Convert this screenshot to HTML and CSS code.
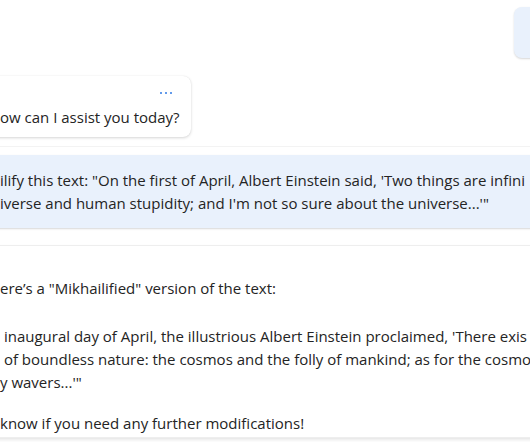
FILE: index.html
```html
<!DOCTYPE html>
<html>
<head>
<meta charset="utf-8">
<link rel="stylesheet" href="styles.css">
</head>
<body>
<div class="chat">
  <div class="row row-right">
    <div class="bubble-user bubble-top"></div>
  </div>
  <div class="row">
    <div class="bubble-bot">
      <div class="more"><span class="dot"></span><span class="dot"></span><span class="dot"></span></div>
      <div class="line">ow can I assist you today?</div>
    </div>
  </div>
  <div class="divider"></div>
  <div class="bubble-user bubble-wide">
    <div class="line">ilify this text: "On the first of April, Albert Einstein said, 'Two things are infini</div>
    <div class="line">iverse and human stupidity; and I'm not so sure about the universe...'"</div>
  </div>
  <div class="card">
    <p class="para"><span class="line">ere’s a "Mikhailified" version of the text:</span></p>
    <p class="para">
      <span class="line"> inaugural day of April, the illustrious Albert Einstein proclaimed, 'There exis</span>
      <span class="line"> of boundless nature: the cosmos and the folly of mankind; as for the cosmo</span>
      <span class="line">y wavers...'"</span>
    </p>
    <p class="para para-last"><span class="line">know if you need any further modifications!</span></p>
  </div>
</div>
</body>
</html>
```

FILE: styles.css
```css
html, body {
  margin: 0;
  padding: 0;
  background: #ffffff;
  overflow: hidden;
  width: 530px;
  height: 442px;
}
.chat {
  padding-top: 7px;
  font-family: "Open Sans", "Noto Sans", sans-serif;
  font-size: 15px;
  color: #242424;
}
.row {
  display: flex;
}
.row-right {
  justify-content: flex-end;
}
.bubble-top {
  width: 40px;
  height: 51px;
  margin-right: -24px;
  border-radius: 8px;
}
.bubble-user {
  background: #e9f1fc;
  box-shadow: 0 1px 2px rgba(0, 0, 0, 0.16);
}
.bubble-bot {
  margin-top: 18px;
  margin-left: -20px;
  width: 211px;
  height: 61px;
  box-sizing: border-box;
  padding-left: 20px;
  background: #ffffff;
  border-radius: 8px;
  box-shadow: 0 1px 3px rgba(0, 0, 0, 0.16), 0 0 1px rgba(0, 0, 0, 0.1);
  display: flex;
  flex-direction: column;
}
.more {
  display: flex;
  justify-content: flex-end;
  align-items: center;
  gap: 3px;
  height: 12px;
  margin-top: 11px;
  margin-bottom: 7px;
  padding-right: 19px;
}
.dot {
  width: 2px;
  height: 2px;
  border-radius: 50%;
  background: #2f7ae5;
}
.line {
  display: block;
  height: 23px;
  line-height: 23px;
  white-space: pre;
  overflow: hidden;
}
.divider {
  margin-top: 9px;
  height: 1px;
  background: #f3f3f3;
}
.bubble-wide {
  margin-top: 8px;
  margin-left: -20px;
  margin-right: -20px;
  height: 73px;
  box-sizing: border-box;
  padding: 14px 0 13px 20px;
  border-radius: 8px;
}
.card {
  margin-top: 18px;
  margin-left: -20px;
  margin-right: -20px;
  height: 191px;
  box-sizing: border-box;
  padding: 31px 0 0 20px;
  background: #ffffff;
  border-radius: 8px;
  box-shadow: 0 0 0 1px #eeeeee, 0 2px 4px rgba(0, 0, 0, 0.14);
}
.para {
  margin: 0 0 25px 0;
}
.para-last {
  margin: -7px 0 0 0;
}
```
